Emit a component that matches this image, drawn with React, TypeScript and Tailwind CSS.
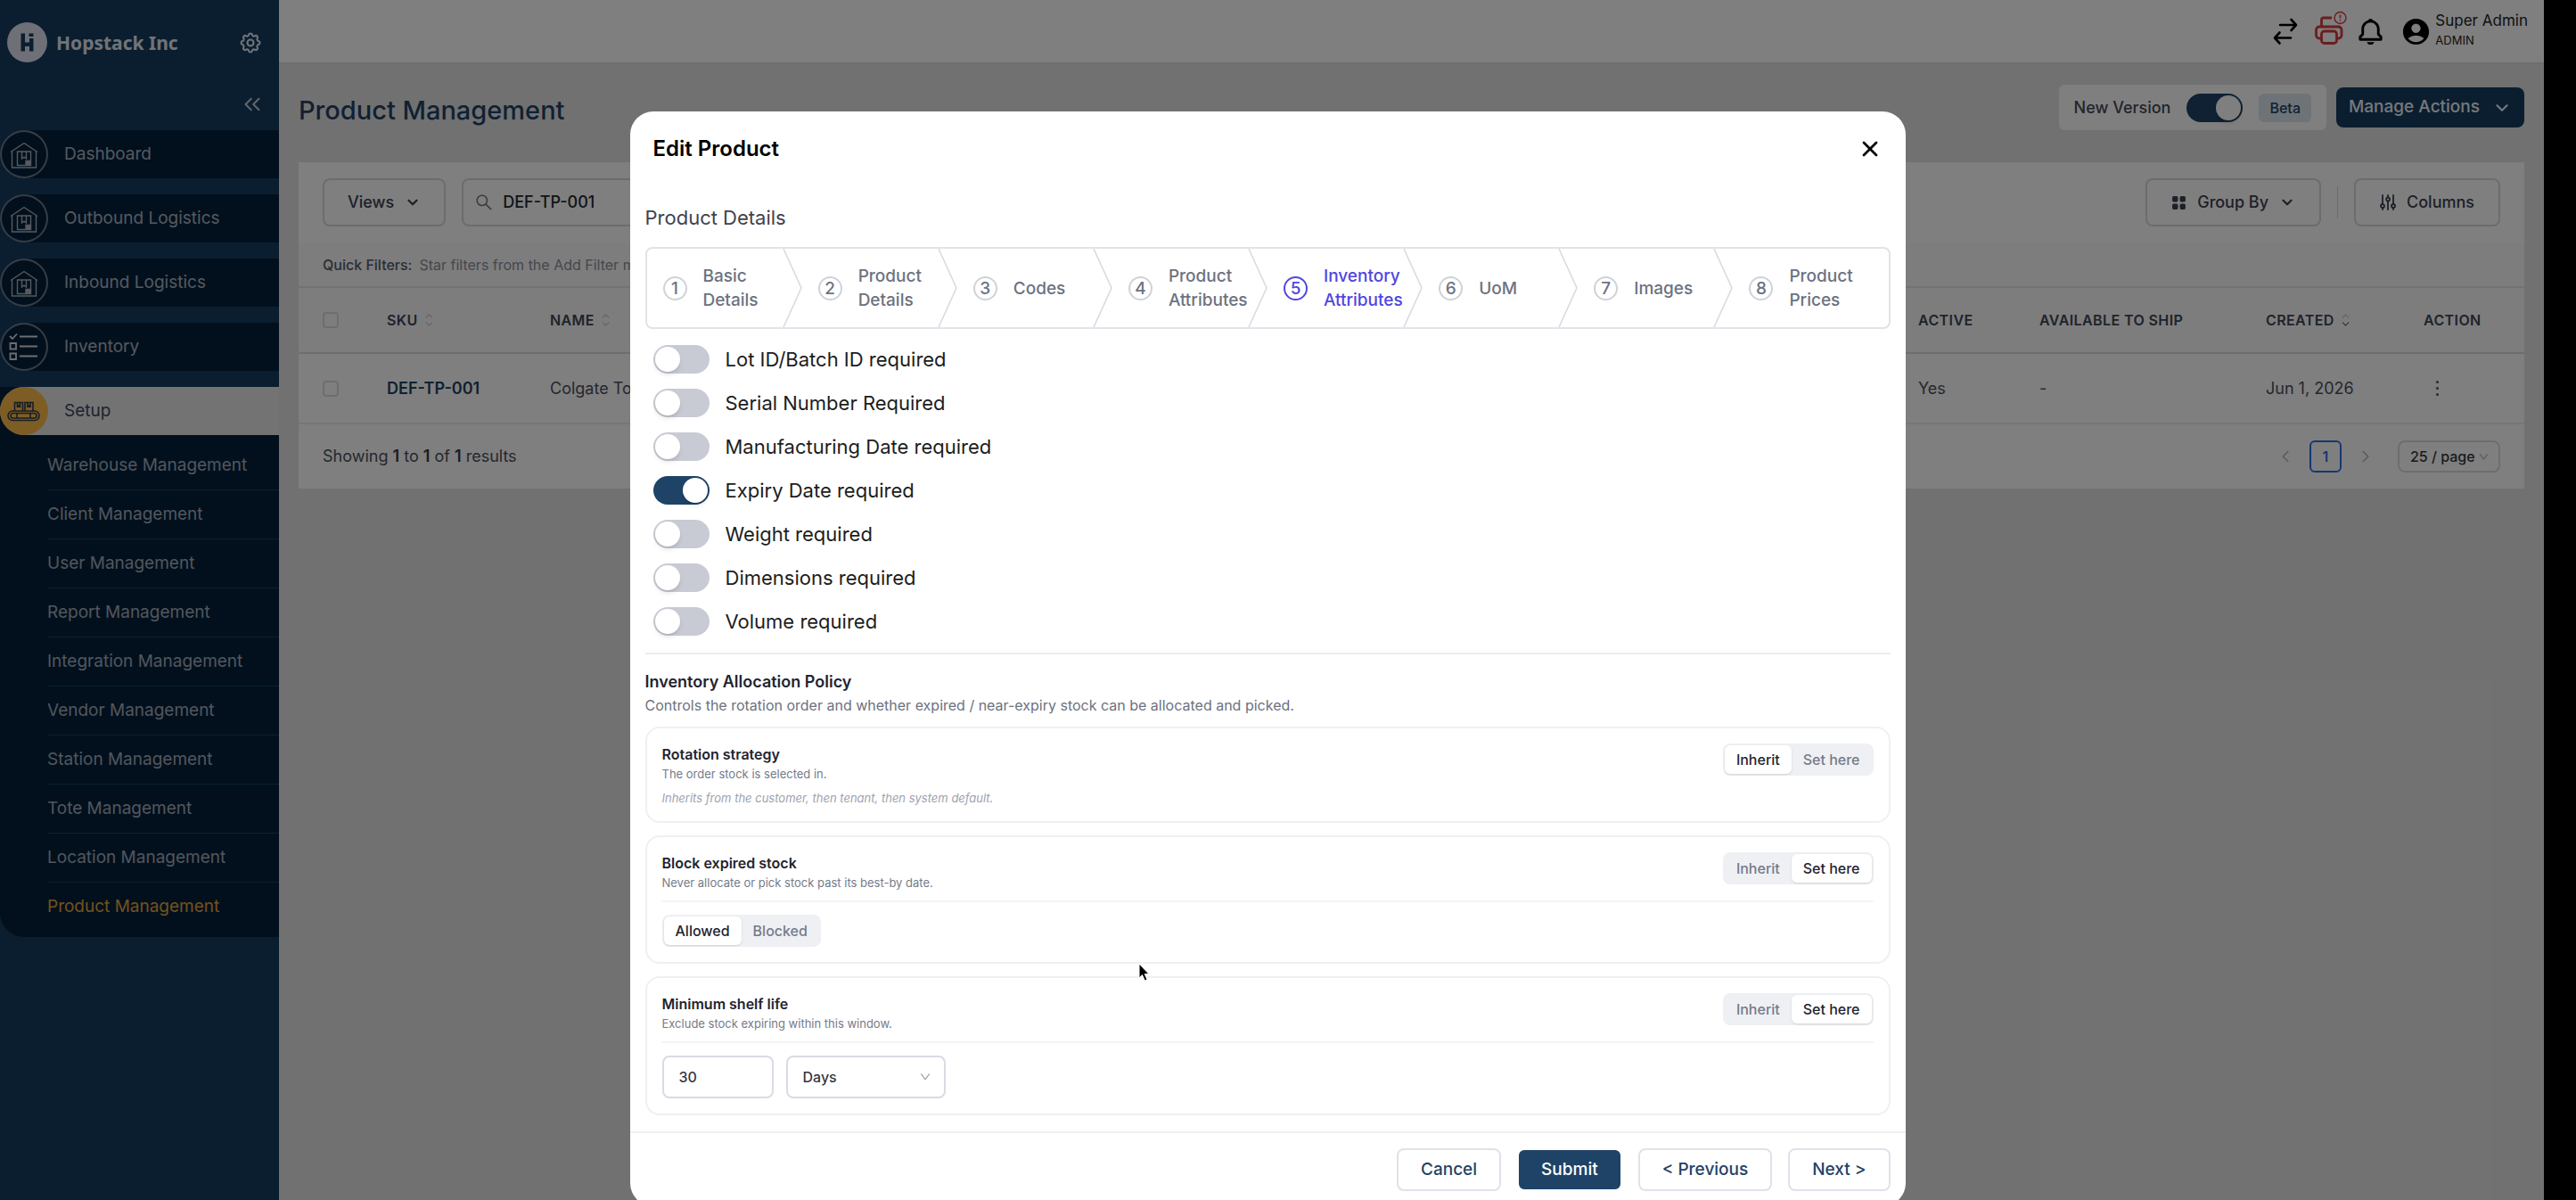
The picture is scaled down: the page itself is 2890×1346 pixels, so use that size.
import React, { useState } from "react";
import { ChevronDown, ChevronLeft, ChevronRight, ChevronUp, ChevronsLeft, X } from "lucide-react";
import { TbSettings } from "react-icons/tb";
import { BiBell } from "react-icons/bi";
import { MdAccountCircle } from "react-icons/md";
import { AiOutlineDown, AiOutlineSearch } from "react-icons/ai";
import { BsGridFill } from "react-icons/bs";

function WarehouseIcon() {
  return (
    <svg viewBox="0 0 54 54" className="size-[54px]" fill="none" stroke="currentColor" strokeWidth="1.4">
      <path d="M12 24.5 27 14.5 42 24.5M13.5 23.5V42h27V23.5" />
      <path d="M19.5 24h15v15.5h-15zM24.5 24v8l2.5-1.8 2.5 1.8v-8" />
      <path d="M29 34.5h5v4h-5z" fill="currentColor" />
    </svg>
  );
}

function ChecklistIcon() {
  return (
    <svg viewBox="0 0 54 54" className="size-[54px] text-[#d8dbe2]" fill="none" stroke="currentColor" strokeWidth="1.8">
      <path d="m11 15 3 3 5-5.5" />
      <path d="M11.5 23h6.5v6.5h-6.5zM11.5 34.5h6.5V41h-6.5zM22 15.5h20M22 26.5h20M22 37.5h20" />
    </svg>
  );
}

function ConveyorIcon() {
  return (
    <svg viewBox="0 0 54 54" className="size-[54px] text-[#2f3a4c]" fill="none" stroke="currentColor" strokeWidth="1.6">
      <rect x="9" y="27" width="35" height="10.5" rx="5.2" />
      <rect x="12" y="29.5" width="29" height="5.5" rx="2.7" />
      <path d="M19 29.5V35M34 29.5V35M16.5 27V17.5h9V27M28 27V17.5h9V27" />
      <path d="M19.5 17.5V22l1.5-1 1.5 1v-4.5M31 17.5V22l1.5-1 1.5 1v-4.5" />
    </svg>
  );
}

function LogoMark() {
  return (
    <svg viewBox="0 0 45 45" className="size-[45px] shrink-0" aria-hidden="true">
      <circle cx="22.5" cy="22.5" r="22.5" fill="#dfe1ee" />
      <path d="M15.5 12.5H20v10h5V18h4.5v14.5H25V27h-5v5.5h-4.5z" fill="#143c60" />
      <rect x="24.5" y="12.5" width="5" height="3.5" fill="#143c60" />
    </svg>
  );
}

function TransferIcon() {
  return (
    <svg viewBox="0 0 28 32" className="h-8 w-7" fill="none" stroke="currentColor" strokeWidth="2.6" strokeLinecap="round" strokeLinejoin="round">
      <path d="M8 9h18M20.5 3 26 9l-5.5 6M20 23.5H2M7.5 17.5 2 23.5l5.5 6" />
    </svg>
  );
}

function PrinterAlertIcon() {
  return (
    <svg viewBox="0 0 38 38" className="size-[38px] text-[#d83a3e]" fill="none" stroke="currentColor" strokeWidth="2.8" strokeLinejoin="round">
      <path d="M8.5 18V10a2 2 0 0 1 2-2H20" />
      <path d="M8 31H6a3.5 3.5 0 0 1-3.5-3.5v-6A3.5 3.5 0 0 1 6 18h21.5a3.5 3.5 0 0 1 3.5 3.5v6a3.5 3.5 0 0 1-3.5 3.5H26" />
      <rect x="8.5" y="23" width="17" height="13.5" rx="3" />
      <circle cx="29.5" cy="8" r="6.5" strokeWidth="1.4" />
      <path d="M29.5 4.5v4M29.5 10v1.5" strokeWidth="1.6" />
    </svg>
  );
}

function ColumnsIcon() {
  return (
    <svg viewBox="0 0 18 18" className="size-[18px]" fill="none" stroke="currentColor" strokeWidth="1.8" strokeLinecap="round">
      <path d="M3 1v9.5M3 15.5V17M9 1v2M9 8v9M15 1v9.5M15 15.5V17" />
      <circle cx="3" cy="13" r="2" />
      <circle cx="9" cy="5.5" r="2" />
      <circle cx="15" cy="13" r="2" />
    </svg>
  );
}

const navItems = [
  { label: "Dashboard", icon: <WarehouseIcon /> },
  { label: "Outbound Logistics", icon: <WarehouseIcon /> },
  { label: "Inbound Logistics", icon: <WarehouseIcon /> },
  { label: "Inventory", icon: <ChecklistIcon /> },
];

const setupItems = [
  "Warehouse Management",
  "Client Management",
  "User Management",
  "Report Management",
  "Integration Management",
  "Vendor Management",
  "Station Management",
  "Tote Management",
  "Location Management",
  "Product Management",
];

function Sidebar() {
  return (
    <aside className="flex w-[313px] shrink-0 flex-col bg-[#143c60]">
      <div className="flex items-center gap-2.5 pt-[25px] pr-[18px] pl-2">
        <LogoMark />
        <span className="flex-1 font-[Noto_Sans] text-[21px] leading-8 font-bold text-[#e4e7ec]">Hopstack Inc</span>
        <button aria-label="Settings" className="text-[#e4e7ec]">
          <TbSettings size={28} strokeWidth={1.8} />
        </button>
      </div>
      <div className="flex justify-end pt-8 pr-[15px]">
        <button aria-label="Collapse menu" className="text-[#c6ccd6]">
          <ChevronsLeft size={30} strokeWidth={1.6} />
        </button>
      </div>
      <nav className="pt-3.5" aria-label="Main">
        <ul className="flex flex-col gap-[18px]">
          {navItems.map((item) => (
            <li key={item.label}>
              <a href="#" className="flex h-[54px] items-center gap-[18px] rounded-l-full bg-[#05213a] text-[19px] text-[#abb3c0]">
                <span className="flex size-[54px] items-center justify-center rounded-full ring-2 ring-[#6f7a8d] ring-inset">
                  {item.icon}
                </span>
                {item.label}
              </a>
            </li>
          ))}
          <li className="overflow-hidden rounded-bl-[27px] bg-[#05213a]">
            <a href="#" className="flex h-[54px] items-center gap-[18px] rounded-l-full bg-[#e6e6e6] text-[19px] text-[#3b4863]">
              <span className="flex size-[54px] items-center justify-center rounded-full bg-[#fbba48]">
                <ConveyorIcon />
              </span>
              Setup
            </a>
            <ul className="py-[7px] pl-[53px]">
              {setupItems.map((label, i) => (
                <li key={label} className={i < setupItems.length - 1 ? "border-b border-[#14405f]" : ""}>
                  <a
                    href="#"
                    className={
                      "flex h-[54px] items-center text-[19px] " +
                      (i === setupItems.length - 1 ? "text-[#e3a33a]" : "text-[#a3acba]")
                    }
                  >
                    {label}
                  </a>
                </li>
              ))}
            </ul>
          </li>
        </ul>
      </nav>
    </aside>
  );
}

function TopBar() {
  return (
    <header className="flex h-[71px] items-center justify-end border-b border-[#d4d4d4] bg-white pr-[18px] text-black">
      <button aria-label="Switch" className="mr-[18px]">
        <TransferIcon />
      </button>
      <button aria-label="Printer status" className="mr-2 pb-2">
        <PrinterAlertIcon />
      </button>
      <button aria-label="Notifications" className="mr-4">
        <BiBell size={35} />
      </button>
      <button className="flex items-center gap-1 text-left">
        <MdAccountCircle size={35} />
        <span className="flex flex-col pb-1 text-[#222]">
          <span className="text-[17px] leading-6">Super Admin</span>
          <span className="text-[13px] leading-5">ADMIN</span>
        </span>
      </button>
    </header>
  );
}

function Switch({ id, label, defaultChecked }: { id: string; label?: string; defaultChecked?: boolean }) {
  return (
    <input
      id={id}
      type="checkbox"
      role="switch"
      aria-label={label}
      defaultChecked={defaultChecked}
      className="flex h-8 w-[63px] shrink-0 appearance-none items-center rounded-full bg-[#c8cbd4] px-0.5 before:size-7 before:rounded-full before:bg-white before:shadow-md checked:justify-end checked:bg-[#1f4366]"
    />
  );
}

function SortIcon({ active }: { active?: boolean }) {
  return (
    <span className="flex flex-col text-[#c4c6cd]">
      <ChevronUp size={13} strokeWidth={2} className="-mb-1" />
      <ChevronDown size={13} strokeWidth={2} className={active ? "text-[#5b6478]" : ""} />
    </span>
  );
}

function ProductPage() {
  return (
    <main className="flex-1 bg-[#e3e3e3] px-[22px]">
      <div className="flex h-[111px] items-center justify-between pb-3">
        <h1 className="pt-1.5 text-[29px] leading-10 font-medium text-[#1f4366]">Product Management</h1>
        <div className="flex items-center gap-[11px]">
          <div className="flex h-[51px] items-center gap-[18px] rounded-md bg-white px-[17px]">
            <label htmlFor="new-version" className="text-lg font-medium text-[#444b57]">
              New Version
            </label>
            <Switch id="new-version" defaultChecked />
            <span className="rounded-md bg-[#dde6ef] px-3 text-base leading-8 font-medium text-[#1f4366]">Beta</span>
          </div>
          <button className="flex h-[45px] items-center gap-3.5 rounded-lg bg-[#143c60] px-3.5 text-[19px] font-medium text-[#eef1f5]">
            Manage Actions
            <ChevronDown size={22} strokeWidth={2.4} />
          </button>
        </div>
      </div>

      <section className="bg-white text-lg text-[#4a4f5c]">
        <div className="flex items-center px-[27px] py-[18px]">
          <button className="mr-[18px] flex h-[54px] items-center gap-3 rounded-lg border-2 border-[#d9d9de] px-[26px] font-medium text-[#3a4150]">
            Views
            <ChevronDown size={18} strokeWidth={3} />
          </button>
          <div className="flex h-[54px] w-[600px] items-center gap-2.5 rounded-lg border-2 border-[#d9d9de] px-3">
            <AiOutlineSearch size={22} className="text-[#777b85]" />
            <input aria-label="Search" defaultValue="DEF-TP-001" className="flex-1 font-medium text-[#23262d] outline-none" />
          </div>
          <div className="ml-auto flex items-center gap-[18px]">
            <button className="flex h-[54px] items-center gap-3 rounded-lg border-2 border-[#d9d9de] px-[27px] font-medium text-[#3a4150]">
              <BsGridFill size={17} />
              Group By
              <ChevronDown size={18} strokeWidth={3} />
            </button>
            <span className="h-9 w-px bg-[#d4d6da]" />
            <button className="flex h-[54px] items-center gap-3 rounded-lg border-2 border-[#d9d9de] px-[27px] font-medium text-[#3a4150]">
              <ColumnsIcon />
              Columns
            </button>
          </div>
        </div>
        <div className="flex h-[51px] items-center gap-2 border-b-2 border-[#e2e4ea] bg-[#fafafa] px-[27px] text-base">
          <span className="font-medium text-[#555b69]">Quick Filters:</span>
          <span className="text-[#8b8f9b]">Star filters from the Add Filter menu</span>
        </div>
        <table className="w-full table-fixed text-left">
          <colgroup>
            <col className="w-[72px]" />
            <col className="w-[183px]" />
            <col />
            <col className="w-[136px]" />
            <col className="w-[254px]" />
            <col className="w-[177px]" />
            <col className="w-[140px]" />
          </colgroup>
          <thead>
            <tr className="h-[73px] border-b-2 border-[#dcdde2] bg-[#fafafa] text-base text-[#3f4656] [&>th]:pl-[27px] [&>th]:font-semibold [&>th]:tracking-wide">
              <th>
                <input type="checkbox" aria-label="Select all" className="block size-[18px] appearance-none rounded border-2 border-[#dcdce0]" />
              </th>
              <th>
                <span className="flex items-center gap-1.5">SKU <SortIcon /></span>
              </th>
              <th>
                <span className="flex items-center gap-1.5">NAME <SortIcon /></span>
              </th>
              <th>ACTIVE</th>
              <th>AVAILABLE TO SHIP</th>
              <th>
                <span className="flex items-center gap-1.5">CREATED <SortIcon active /></span>
              </th>
              <th>ACTION</th>
            </tr>
          </thead>
          <tbody>
            <tr className="h-[79px] border-b-2 border-[#ececf0] [&>td]:pl-[27px]">
              <td>
                <input type="checkbox" aria-label="Select DEF-TP-001" className="block size-[18px] appearance-none rounded border-2 border-[#dcdce0]" />
              </td>
              <td>
                <a href="#" className="font-semibold text-[#1f4366]">DEF-TP-001</a>
              </td>
              <td>Colgate Toothpaste</td>
              <td>Yes</td>
              <td>-</td>
              <td>Jun 1, 2026</td>
              <td>
                <button aria-label="Row actions" className="flex flex-col gap-1 pl-3.5">
                  <span className="size-[3px] rounded-full bg-[#4a4f5c]" />
                  <span className="size-[3px] rounded-full bg-[#4a4f5c]" />
                  <span className="size-[3px] rounded-full bg-[#4a4f5c]" />
                </button>
              </td>
            </tr>
          </tbody>
        </table>
        <div className="flex h-[72px] items-center px-[27px]">
          <p className="flex-1">
            Showing <b className="font-semibold text-[#333947]">1</b> to <b className="font-semibold text-[#333947]">1</b> of{" "}
            <b className="font-semibold text-[#333947]">1</b> results
          </p>
          <button aria-label="Previous page" className="mr-4 text-[#b4b7bd]">
            <ChevronLeft size={22} strokeWidth={1.8} />
          </button>
          <button className="h-9 w-9 rounded-md border-2 border-[#2f6fe8] text-base font-semibold text-[#2f6fe8]">1</button>
          <button aria-label="Next page" className="mr-[25px] ml-4 text-[#b4b7bd]">
            <ChevronRight size={22} strokeWidth={1.8} />
          </button>
          <div className="relative">
            <select aria-label="Page size" className="h-9 w-[115px] appearance-none rounded-lg border-2 border-[#dcdce0] pl-3 text-base font-medium text-[#33363d]">
              <option>25 / page</option>
            </select>
            <AiOutlineDown size={13} className="pointer-events-none absolute top-3 right-3 text-[#a9acb3]" />
          </div>
        </div>
      </section>
    </main>
  );
}

const steps = ["Basic Details", "Product Details", "Codes", "Product Attributes", "Inventory Attributes", "UoM", "Images", "Product Prices"];

function Stepper({ current }: { current: number }) {
  return (
    <ol className="grid grid-cols-8 rounded-lg border-2 border-[#e2e3e8]">
      {steps.map((label, i) => {
        const active = i === current;
        return (
          <li key={label} className="relative">
            <button
              aria-current={active ? "step" : undefined}
              className={
                "flex h-[88px] w-full items-center gap-[18px] pl-[18px] text-left text-[19px] leading-[27px] font-medium " +
                (active ? "text-[#5046e0]" : "text-[#6d7280]")
              }
            >
              <span
                className={
                  "flex size-[27px] shrink-0 items-center justify-center rounded-full border-2 " +
                  (active ? "border-[#5046e0]" : "border-[#cfd2da]")
                }
              >
                {i + 1}
              </span>
              <span className="w-24">{label}</span>
            </button>
            {i < steps.length - 1 && (
              <svg viewBox="0 0 22 88" preserveAspectRatio="none" className="pointer-events-none absolute top-0 right-0 h-full w-[22px]" fill="none" stroke="#d9dbe1" strokeWidth="1.6">
                <path d="M1 0 21 44 1 88" />
              </svg>
            )}
          </li>
        );
      })}
    </ol>
  );
}

const requirements = [
  { id: "lot", label: "Lot ID/Batch ID required" },
  { id: "serial", label: "Serial Number Required" },
  { id: "mfg", label: "Manufacturing Date required" },
  { id: "expiry", label: "Expiry Date required", on: true },
  { id: "weight", label: "Weight required" },
  { id: "dimensions", label: "Dimensions required" },
  { id: "volume", label: "Volume required" },
];

function Segmented({ options, initial }: { options: string[]; initial: number }) {
  const [selected, setSelected] = useState(initial);
  return (
    <div className="flex w-fit rounded-lg bg-[#eff0f4] p-0.5">
      {options.map((option, i) => (
        <button
          key={option}
          aria-pressed={i === selected}
          onClick={() => setSelected(i)}
          className={
            "h-8 rounded-md px-[13px] text-base font-medium " +
            (i === selected ? "bg-white text-[#1f2430] shadow-sm" : "text-[#757b89]")
          }
        >
          {option}
        </button>
      ))}
    </div>
  );
}

function PolicyCard(props: { title: string; text: string; initial: number; note?: string; children?: React.ReactNode }) {
  return (
    <section className="rounded-2xl border-2 border-[#eff0f4] p-[17px]">
      <div className="flex items-start justify-between">
        <div>
          <h4 className="text-base leading-6 font-semibold text-[#1f2430]">{props.title}</h4>
          <p className="text-[13px] leading-5 text-[#757b89]">{props.text}</p>
          {props.note && <p className="pt-2 text-[13px] leading-[18px] text-[#9da2ae] italic">{props.note}</p>}
        </div>
        <Segmented options={["Inherit", "Set here"]} initial={props.initial} />
      </div>
      {props.children && <div className="mt-2.5 flex gap-3.5 border-t-2 border-[#f4f4f7] pt-3.5">{props.children}</div>}
    </section>
  );
}

function EditProductDialog() {
  return (
    <div role="dialog" aria-labelledby="dialog-title" className="w-full max-w-[1431px] rounded-[26px] bg-white">
      <div className="flex h-[84px] items-center justify-between px-[26px]">
        <h2 id="dialog-title" className="text-2xl font-semibold text-black">Edit Product</h2>
        <button aria-label="Close" className="text-black">
          <X size={28} strokeWidth={2.4} />
        </button>
      </div>

      <div className="px-[17px] pb-[18px]">
        <h3 className="pt-5 pb-[18px] text-[22px] leading-[30px] text-[#3f434c]">Product Details</h3>
        <Stepper current={4} />
        <ul className="flex flex-col gap-[17px] px-[9px] pt-[18px]">
          {requirements.map((r) => (
            <li key={r.id} className="flex items-center gap-[18px]">
              <Switch id={r.id} defaultChecked={r.on} />
              <label htmlFor={r.id} className="text-[22px] leading-8 text-[#1c1d20]">
                {r.label}
              </label>
            </li>
          ))}
        </ul>

        <div className="mt-[19px] border-t-2 border-[#ededf0] pt-[17px]">
          <h3 className="text-lg leading-7 font-semibold text-[#1f2430]">Inventory Allocation Policy</h3>
          <p className="text-base leading-6 text-[#6d7280]">
            Controls the rotation order and whether expired / near-expiry stock can be allocated and picked.
          </p>
        </div>

        <div className="flex flex-col gap-3.5 pt-3">
          <PolicyCard
            title="Rotation strategy"
            text="The order stock is selected in."
            initial={0}
            note="Inherits from the customer, then tenant, then system default."
          />
          <PolicyCard title="Block expired stock" text="Never allocate or pick stock past its best-by date." initial={1}>
            <Segmented options={["Allowed", "Blocked"]} initial={0} />
          </PolicyCard>
          <PolicyCard title="Minimum shelf life" text="Exclude stock expiring within this window." initial={1}>
            <input
              aria-label="Minimum shelf life"
              defaultValue="30"
              className="h-12 w-[125px] rounded-lg border-2 border-[#d9dbe4] px-[17px] text-base font-medium text-[#33363d] outline-none"
            />
            <div className="relative">
              <select
                aria-label="Unit"
                className="h-12 w-[179px] appearance-none rounded-lg border-2 border-[#d9dbe4] bg-white px-[17px] text-base font-medium text-[#33363d]"
              >
                <option>Days</option>
              </select>
              <AiOutlineDown size={14} className="pointer-events-none absolute top-[17px] right-4 text-[#9398a3]" />
            </div>
          </PolicyCard>
        </div>
      </div>

      <div className="flex justify-end gap-[18px] border-t-2 border-[#f0f0f2] px-[17px] py-[17px] text-[19px] font-medium text-[#1f4366]">
        <button className="h-12 rounded-lg border-2 border-[#e0e2ea] px-[25px]">Cancel</button>
        <button className="h-12 rounded-lg border-2 border-white bg-[#1f4366] px-[25px] text-white">Submit</button>
        <button className="h-12 rounded-lg border-2 border-[#e0e2ea] px-[25px]">&lt; Previous</button>
        <button className="h-12 rounded-lg border-2 border-[#e0e2ea] px-[25px]">Next &gt;</button>
      </div>
    </div>
  );
}

function PointerIcon() {
  return (
    <svg viewBox="0 0 14 22" className="pointer-events-none absolute top-[1080px] left-[1276px] h-[22px] w-3.5">
      <path d="M2 1v16l3.5-3.4 2.8 6.4 2.7-1.2-2.7-6.2H13z" fill="#000" stroke="#fff" strokeWidth="1" />
    </svg>
  );
}

export default function App() {
  return (
    <div className="flex h-screen overflow-hidden bg-black pr-9 font-[Inter,sans-serif]">
      <div className="relative flex flex-1">
        <Sidebar />
        <div className="flex min-w-0 flex-1 flex-col">
          <TopBar />
          <ProductPage />
        </div>
        <div className="absolute inset-0 flex items-start justify-center overflow-hidden bg-black/50 pt-[125px] pr-2.5">
          <EditProductDialog />
          <PointerIcon />
        </div>
      </div>
    </div>
  );
}
